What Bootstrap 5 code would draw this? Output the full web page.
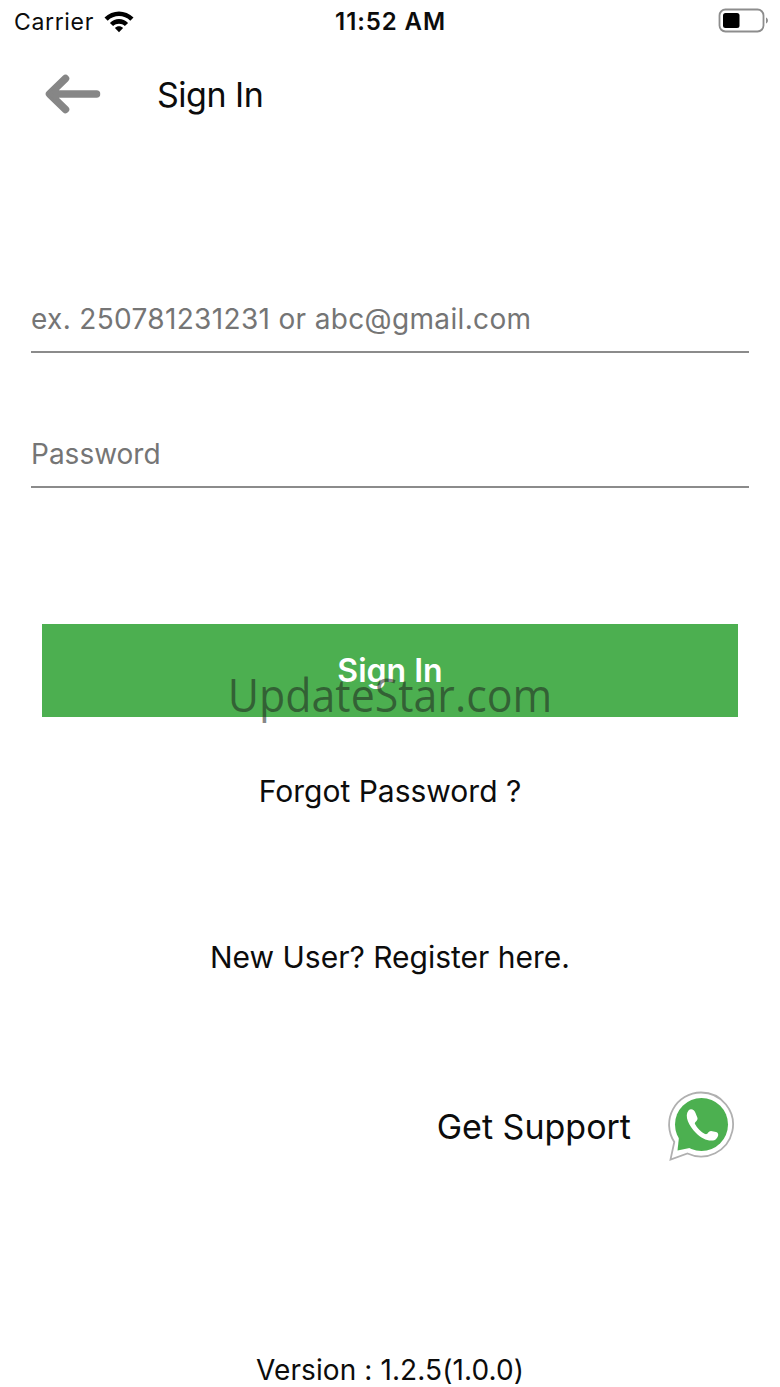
<!DOCTYPE html>
<html lang="en">

<head>
    <meta charset="UTF-8">
    <meta name="viewport" content="width=device-width, initial-scale=1.0">
    <title>Sign In</title>
    <link href="https://cdn.jsdelivr.net/npm/bootstrap@5.3.0/dist/css/bootstrap.min.css" rel="stylesheet">
    <style>
        body {
            font-family: Inter, "Liberation Sans", sans-serif;
            background-color: #fff;
            color: #0c0c0c;
        }

        .screen {
            height: 1387px;
            overflow: hidden;
        }

        .screen > * {
            flex-shrink: 0;
        }

        .status-bar {
            height: 44px;
            padding: 0 11px 0 14px;
            font-size: 23px;
            line-height: 44px;
        }

        .status-bar > div {
            flex: 1 1 0;
        }

        .carrier {
            letter-spacing: .65px;
        }

        .clock {
            padding-right: 2px;
            font-size: 24px;
            font-weight: 600;
            letter-spacing: .9px;
        }

        .title-bar {
            height: 100px;
            padding-left: 45px;
        }

        .title-bar h1 {
            margin: 2px 0 0 56px;
            font-size: 34px;
            font-weight: 400;
            letter-spacing: -.5px;
        }

        .login-form {
            padding: 143px 31px 0;
        }

        .login-form .form-control {
            height: 66px;
            padding: 0;
            border: 0;
            border-bottom: 2px solid #8b8b8b;
            border-radius: 0;
            font-size: 28px;
            background: none;
        }

        .login-form .form-control::placeholder {
            color: #757575;
            opacity: 1;
        }

        .login-form .user-input {
            letter-spacing: .34px;
        }

        .login-form .password-input {
            margin-top: 69px;
        }

        .btn-signin {
            height: 93px;
            margin: 136px 11px 0;
            border: 0;
            border-radius: 0;
            background-color: #4caf50;
            color: #fff;
            font-size: 32px;
            font-weight: 600;
        }

        .watermark {
            left: 0;
            right: 0;
            top: 50%;
            transform: translateY(-50%) scaleX(.953);
            font-family: "Open Sans", "Noto Sans", sans-serif;
            font-size: 45px;
            line-height: 1;
            color: rgba(30, 30, 30, .55);
            pointer-events: none;
        }

        .page-link-text {
            color: #0c0c0c;
            font-size: 30px;
            line-height: 40px;
            text-decoration: none;
        }

        .forgot {
            margin-top: 54px;
        }

        .register {
            margin-top: 126px;
        }

        .support {
            height: 70px;
            margin-top: 114px;
            padding-right: 45px;
            gap: 36px;
            color: #0c0c0c;
            font-size: 34px;
            text-decoration: none;
        }

        .version {
            margin-top: 189px;
            font-size: 28px;
            line-height: 40px;
            letter-spacing: .1px;
        }
    </style>
</head>

<body>
    <div class="screen d-flex flex-column position-relative">
        <div class="status-bar d-flex align-items-center">
            <div class="d-flex align-items-center">
                <span class="carrier">Carrier</span>
                <svg class="ms-2" width="34" height="26" viewBox="0 0 34 26">
                    <path d="M2.500 8.500C10.500 .5 23.500 .5 31.500 8.500L28.300 11.700C22 5.500 12 5.500 5.700 11.700Z"/>
                    <path d="M7.900 13.900C13 8.800 21 8.800 26.100 13.900L22.900 17.100C19.600 13.900 14.400 13.900 11.100 17.100Z"/>
                    <path d="M17 23.200L12.900 19C15.200 16.800 18.800 16.800 21.100 19Z"/>
                </svg>
            </div>
            <div class="clock text-center">11:52 AM</div>
            <div class="d-flex justify-content-end">
                <svg class="mb-1" width="51" height="26" viewBox="0 0 51 26">
                    <rect x="1.500" y="2.500" width="44" height="22" rx="6" fill="none" stroke="#8d8d8d" stroke-width="1.800"/>
                    <rect x="5" y="6" width="16.500" height="15" rx="2.500" fill="#000"/>
                    <path d="M48 10.500c2.600 1 2.600 5 0 6z" fill="#8d8d8d"/>
                </svg>
            </div>
        </div>

        <header class="title-bar d-flex align-items-center">
            <svg width="56" height="42" viewBox="0 0 56 42" fill="none" stroke="#868686" stroke-width="7.500" stroke-linecap="round" stroke-linejoin="round">
                <path d="M20.500 5.500L4.500 21L20.500 36.500M5 21H51.500"/>
                <path d="M5 21L10 17V25Z" fill="#868686" stroke-width="3"/>
            </svg>
            <h1>Sign In</h1>
        </header>

        <form class="login-form d-flex flex-column" id="loginForm">
            <input type="text" class="form-control user-input" name="username" placeholder="ex. 250781231231 or abc@gmail.com">
            <input type="password" class="form-control password-input" name="password" placeholder="Password">
            <button type="submit" class="btn btn-signin">Sign In</button>
        </form>

        <a class="page-link-text forgot text-center" href="#">Forgot Password ?</a>
        <a class="page-link-text register text-center" href="#">New User? Register here.</a>

        <a class="support d-flex align-items-center justify-content-end" href="#">
            <span>Get Support</span>
            <svg width="68" height="72" viewBox="0 0 68 72">
                <path d="M34 2.500A32 32 0 1 1 20.500 63.500L3.500 69.500L7.300 52A32 32 0 0 1 34 2.500Z" fill="#fff" stroke="#b0b0b0" stroke-width="1.800"/>
                <circle cx="34.500" cy="34.500" r="26.500" fill="#4cb050"/>
                <path d="M12 47L10.500 60.500L25 57.500Z" fill="#4cb050"/>
                <path d="M21.500 20.500C24 18 27.500 20 28.500 23L30.500 28C31 31 27 32 28 34C30 38 34 42 38 44C41 45 41 41 44 41L49 42C53 43 51 48 48 50C42 52 35 49 29 43C22 36 17 26 21.500 20.500Z" fill="#fff"/>
            </svg>
        </a>

        <div class="version text-center">Version : 1.2.5(1.0.0)</div>

        <div class="watermark position-absolute text-center">UpdateStar.com</div>
    </div>

    <script src="https://cdn.jsdelivr.net/npm/bootstrap@5.3.0/dist/js/bootstrap.bundle.min.js"></script>
    <script>
        document.getElementById('loginForm').addEventListener('submit', function (e) {
            e.preventDefault();
        });
    </script>
</body>

</html>
